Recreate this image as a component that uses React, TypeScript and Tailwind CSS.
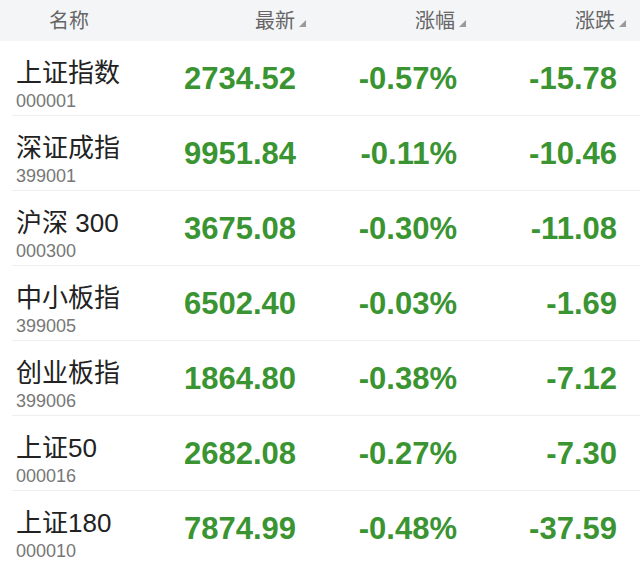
import React from "react";

type Row = { name: string; code: string; price: string; pct: string; chg: string };

const rows: Row[] = [
    { name: "上证指数", code: "000001", price: "2734.52", pct: "-0.57%", chg: "-15.78" },
    { name: "深证成指", code: "399001", price: "9951.84", pct: "-0.11%", chg: "-10.46" },
    { name: "沪深 300", code: "000300", price: "3675.08", pct: "-0.30%", chg: "-11.08" },
    { name: "中小板指", code: "399005", price: "6502.40", pct: "-0.03%", chg: "-1.69" },
    { name: "创业板指", code: "399006", price: "1864.80", pct: "-0.38%", chg: "-7.12" },
    { name: "上证50", code: "000016", price: "2682.08", pct: "-0.27%", chg: "-7.30" },
    { name: "上证180", code: "000010", price: "7874.99", pct: "-0.48%", chg: "-37.59" },
];

const font = { fontFamily: '"Liberation Sans", "Noto Sans CJK SC", sans-serif' };

// petit triangle de tri à côté des en-têtes
function SortMark() {
    return (
        <svg width="7" height="7" viewBox="0 0 7 7" className="absolute -right-[11px] bottom-[9px]">
            <polygon points="7,0 7,7 0,7" fill="#9a9a9a" />
        </svg>
    );
}

function HeadCell({ label, width }: { label: string; width: string }) {
    return (
        <div className={`${width} flex justify-end`}>
            <span className="relative">
                {label}
                <SortMark />
            </span>
        </div>
    );
}

export default function App() {
    return (
        <div className="w-[640px] h-[561px] overflow-hidden bg-white" style={font}>
            <div className="h-[41px] bg-[#f4f5f7] flex items-center text-[20px] text-[#666]">
                <div className="w-[180px] pl-[49px]">名称</div>
                <HeadCell label="最新" width="w-[115px]" />
                <HeadCell label="涨幅" width="w-[160px]" />
                <HeadCell label="涨跌" width="w-[160px]" />
            </div>
            <div className="pl-[12px]">
                {rows.map((r) => (
                    <div key={r.code} className="h-[75px] border-b border-[#eeeeee] flex items-center">
                        <div className="w-[168px] pl-[4px] self-start pt-[17px]">
                            <div className="text-[26px] leading-[30px] text-[#222]">{r.name}</div>
                            <div className="text-[18px] leading-[20px] mt-[3px] text-[#777]">{r.code}</div>
                        </div>
                        <div className="w-[116px] pt-[3px] text-right text-[31px] font-bold text-[#3a9432]">{r.price}</div>
                        <div className="w-[161px] pt-[3px] text-right text-[31px] font-bold text-[#3a9432]">{r.pct}</div>
                        <div className="w-[160px] pt-[3px] text-right text-[31px] font-bold text-[#3a9432]">{r.chg}</div>
                    </div>
                ))}
            </div>
        </div>
    );
}
